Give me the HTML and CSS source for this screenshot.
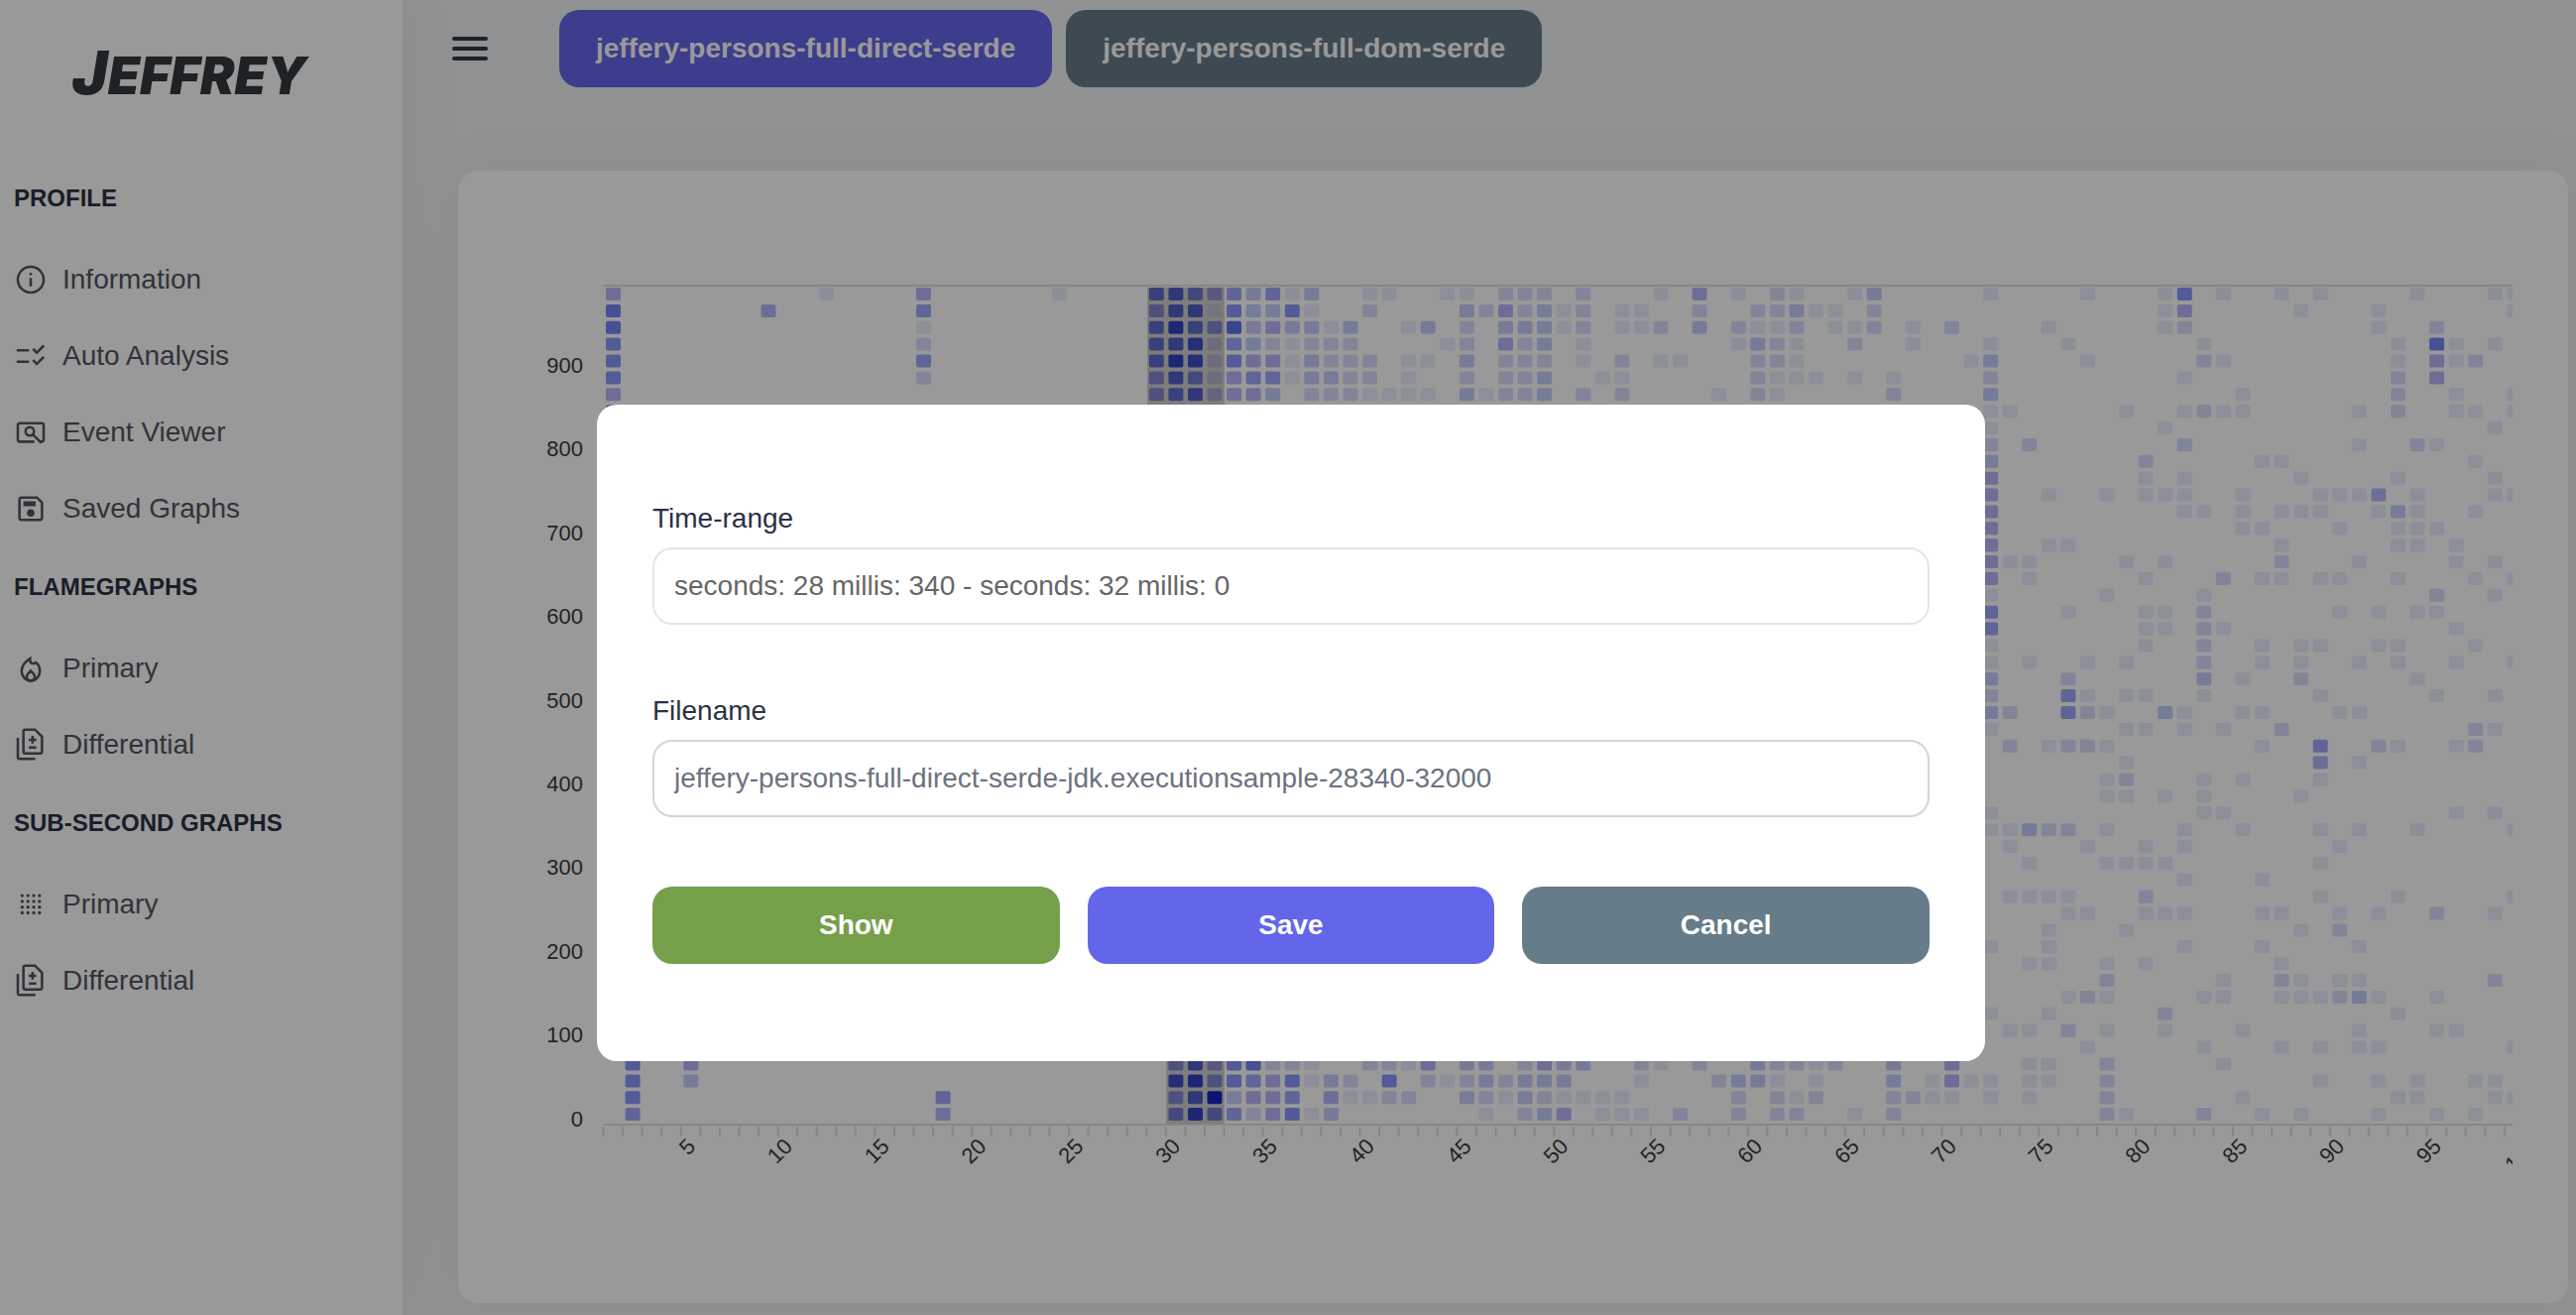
FILE: index.html
```html
<!DOCTYPE html>
<html lang="en">
<head>
<meta charset="utf-8">
<title>Jeffrey</title>
<link rel="stylesheet" href="styles.css">
</head>
<body>
<div class="layout">
  <aside class="sidebar">
    <a class="logo" href="#"><span class="logo-initial">J</span>EFFREY</a>
    <nav class="menu">
      <h2 class="menu-title">PROFILE</h2>
      <a class="menu-item" href="#">
        <svg class="icon" viewBox="0 0 24 24"><circle cx="12" cy="12" r="9.2"/><path d="M12 10.8v6"/><circle class="solid" cx="12" cy="8" r="1"/></svg>
        Information</a>
      <a class="menu-item" href="#">
        <svg class="icon" viewBox="0 0 24 24"><path d="M2 8h8.8M2 16h8.8M13.6 6.9l2.7 2.7 5-5M13.6 14.9l2.7 2.7 5-5"/></svg>
        Auto Analysis</a>
      <a class="menu-item" href="#">
        <svg class="icon" viewBox="0 0 24 24"><path d="M14.6 18.6H4.2c-.8 0-1.400-.6-1.400-1.400V6.800c0-.8.6-1.400 1.400-1.400h15.600c.8 0 1.400.6 1.400 1.400v10.400c0 .8-.6 1.400-1.400 1.400h-1.600"/><circle cx="11.3" cy="11.3" r="3"/><path d="M13.5 13.5l6 6"/></svg>
        Event Viewer</a>
      <a class="menu-item" href="#">
        <svg class="icon" viewBox="0 0 24 24"><path d="M16.4 4H5.4C4.6 4 4 4.600 4 5.400v13.200c0 .8.6 1.400 1.400 1.400h13.200c.8 0 1.400-.6 1.400-1.400V7.600z"/><path class="solid" d="M6.800 6.700h8.700v3.500H6.800z"/><circle class="solid" cx="12" cy="15" r="2.700"/></svg>
        Saved Graphs</a>
      <h2 class="menu-title">FLAMEGRAPHS</h2>
      <a class="menu-item" href="#">
        <svg class="icon" viewBox="0 0 24 24"><path d="M11.500 5C7.800 7.300 5.500 10.500 5.500 14a6.500 6.900 0 0 0 13 0c0-2.700-1.100-4.900-2.900-6.200-1.700 1.500-4.100.5-4.100-1.500z"/><path d="M12 13.700l-2.300 2.500c-1.300 1.700-.5 4.600 2.300 4.600s3.600-2.900 2.300-4.600z"/></svg>
        Primary</a>
      <a class="menu-item" href="#">
        <svg class="icon" viewBox="0 0 24 24"><path d="M15 1.200H8.200c-.8 0-1.400.6-1.400 1.400v14.200c0 .8.6 1.400 1.400 1.400H18.600c.8 0 1.400-.6 1.400-1.400V6.200z"/><path d="M2.800 7v13.700c0 .8.6 1.400 1.400 1.400h11.100M13.300 5.700v5.400M10.600 8.400H16M10.600 14H16"/></svg>
        Differential</a>
      <h2 class="menu-title">SUB-SECOND GRAPHS</h2>
      <a class="menu-item" href="#">
        <svg class="icon icon-dots" viewBox="0 0 24 24"><path d="M5.900 5.700h.01M10 5.700h.01M14.100 5.700h.01M18.200 5.700h.01M5.900 9.800h.01M10 9.800h.01M14.100 9.800h.01M18.200 9.800h.01M5.900 13.900h.01M10 13.900h.01M14.100 13.900h.01M18.200 13.900h.01M5.900 18h.01M10 18h.01M14.100 18h.01M18.200 18h.01"/></svg>
        Primary</a>
      <a class="menu-item" href="#">
        <svg class="icon" viewBox="0 0 24 24"><path d="M15 1.200H8.200c-.8 0-1.400.6-1.400 1.400v14.200c0 .8.6 1.400 1.400 1.400H18.600c.8 0 1.400-.6 1.400-1.400V6.200z"/><path d="M2.800 7v13.700c0 .8.6 1.400 1.400 1.400h11.100M13.300 5.700v5.400M10.600 8.400H16M10.600 14H16"/></svg>
        Differential</a>
    </nav>
  </aside>
  <main class="content">
    <header class="topbar">
      <button class="menu-toggle" type="button" aria-label="Toggle menu">
        <svg viewBox="0 0 36 26"><path d="M2 3h32M2 13h32M2 23h32"/></svg>
      </button>
      <button class="btn btn-primary" type="button">jeffery-persons-full-direct-serde</button>
      <button class="btn btn-secondary" type="button">jeffery-persons-full-dom-serde</button>
    </header>
    <section class="card">
      <svg class="heatmap" id="heatmap" viewBox="0 0 2072 1086" role="img" aria-label="Sub-second heatmap"></svg>
    </section>
  </main>
</div>
<div class="overlay">
  <form class="dialog" role="dialog" aria-modal="true">
    <div class="field">
      <label for="range">Time-range</label>
      <input id="range" type="text" value="seconds: 28 millis: 340 - seconds: 32 millis: 0" disabled>
    </div>
    <div class="field">
      <label for="filename">Filename</label>
      <input id="filename" type="text" value="jeffery-persons-full-direct-serde-jdk.executionsample-28340-32000">
    </div>
    <div class="actions">
      <button class="btn btn-success" type="button">Show</button>
      <button class="btn btn-primary" type="button">Save</button>
      <button class="btn btn-secondary" type="button">Cancel</button>
    </div>
  </form>
</div>
<script src="heatmap.js"></script>
</body>
</html>
```
FILE: styles.css
```css
* {
  box-sizing: border-box;
}

body {
  margin: 0;
  background: #eff2f5;
  color: #334155;
  font-family: "Liberation Sans", Arial, sans-serif;
  font-size: 28px;
  line-height: 34px;
}

.layout {
  display: flex;
  min-height: 100vh;
}

.sidebar {
  flex: 0 0 406px;
  background: #fff;
  box-shadow: 0 0 60px rgba(0, 0, 0, 0.06);
}

.logo {
  display: block;
  height: 160px;
  padding: 38px 24px 0 0;
  color: #343a3d;
  font-family: Inter, "Liberation Sans", sans-serif;
  font-size: 52px;
  font-style: italic;
  font-weight: 900;
  line-height: 70px;
  text-align: center;
  text-decoration: none;
}

.logo-initial {
  font-size: 60px;
}

.menu-title {
  margin: 0;
  padding: 26px 14px 30px;
  color: #2a3245;
  font-size: 24px;
  line-height: 28px;
}

.menu-item {
  display: flex;
  align-items: center;
  gap: 15px;
  height: 77px;
  padding: 0 14px 2px;
  color: #53565f;
  text-decoration: none;
}

.icon {
  width: 34px;
  height: 34px;
  overflow: visible;
  fill: none;
  stroke: currentColor;
  stroke-width: 1.8;
}

.icon .solid {
  fill: currentColor;
  stroke: none;
}

.icon-dots {
  stroke-linecap: round;
  stroke-width: 2.4;
}

.content {
  flex: 1;
  min-width: 0;
  padding: 10px 8px 12px 56px;
}

.topbar {
  display: flex;
  align-items: center;
  gap: 14px;
  margin-bottom: 84px;
}

.menu-toggle {
  width: 94px;
  margin-left: -6px;
  padding: 0;
  border: 0;
  background: none;
}

.menu-toggle svg {
  display: block;
  width: 36px;
  height: 26px;
  fill: none;
  stroke: #343a3d;
  stroke-linecap: round;
  stroke-width: 4;
}

.btn {
  height: 78px;
  padding: 0 37px;
  border: 0;
  border-radius: 20px;
  color: #fff;
  font: bold 28px/34px "Liberation Sans", Arial, sans-serif;
}

.btn-primary {
  background: #6466ea;
}

.btn-secondary {
  background: #667c88;
}

.btn-success {
  background: #769f4a;
}

.card {
  padding: 28px;
  border-radius: 20px;
  background: #fff;
  box-shadow: 0 0 60px rgba(0, 0, 0, 0.05);
}

.heatmap {
  display: block;
  width: 100%;
  fill: #373d3f;
  font-size: 22px;
}

.heatmap .axis {
  fill: none;
  stroke: #e0e0e0;
  stroke-width: 2;
}

.heatmap .selection {
  fill: #000;
  fill-opacity: 0.18;
}

.heatmap .y-label,
.heatmap .x-label {
  text-anchor: end;
  dominant-baseline: central;
}

.overlay {
  position: fixed;
  inset: 0;
  display: flex;
  justify-content: center;
  align-items: flex-start;
  padding: 408px 0 0 6px;
  background: rgba(0, 0, 0, 0.4);
}

.dialog {
  display: flex;
  flex-direction: column;
  gap: 70px;
  width: 1400px;
  max-width: 100%;
  padding: 98px 56px;
  border-radius: 20px;
  background: #fff;
}

.field {
  display: flex;
  flex-direction: column;
  gap: 12px;
  color: #2a3245;
}

.field input {
  width: 100%;
  height: 78px;
  padding: 0 20px;
  border: 2px solid #d1d5db;
  border-radius: 20px;
  background: #fff;
  color: #6b7280;
  font: 28px/34px "Liberation Sans", Arial, sans-serif;
}

.field input:disabled {
  border-color: #e5e5e5;
  color: #666;
}

.actions {
  display: grid;
  grid-template-columns: repeat(3, 1fr);
  gap: 28px;
}
```
FILE: heatmap.js
```js
// Samples per bucket: one string per 20 ms row (top to bottom), "second:level" pairs.
const rows = [
  "0:4 11:1 16:4 23:1 28:7 29:8 30:6 31:4 32:5 33:3 34:5 35:1 36:3 39:1 40:1 43:1 44:1 46:2 47:2 48:2 50:2 54:1 56:4 58:1 60:2 61:1 64:1 65:3 71:1 76:1 80:1 81:6 83:1 86:1 88:1 93:1 97:1 98:1",
  "0:7 8:4 16:5 28:5 29:8 30:8 31:1 32:6 33:3 34:3 35:6 36:1 39:2 44:3 45:2 46:4 47:2 48:3 49:1 50:2 52:1 53:1 56:2 59:2 60:2 61:3 62:1 63:1 65:2 80:1 81:4 87:1 91:1 98:1",
  "0:7 16:1 28:7 29:10 30:7 31:5 32:8 33:3 34:4 35:3 36:3 37:1 38:3 41:1 42:3 44:2 46:3 47:3 48:3 49:1 50:2 52:1 53:1 54:2 56:3 58:2 59:1 60:1 61:2 63:1 64:1 65:2 67:1 69:2 74:1 80:1 81:2 91:1 94:2",
  "0:6 16:2 28:7 29:8 30:9 31:2 32:5 33:3 34:2 35:1 36:2 37:2 38:2 43:1 44:2 46:4 47:2 48:3 50:1 58:1 59:3 60:2 61:1 64:2 67:1 71:1 75:1 82:1 92:1 94:7 95:1 97:1",
  "0:6 16:5 28:7 29:10 30:9 31:2 32:6 33:4 34:4 35:1 36:3 37:2 38:2 39:2 41:1 42:1 44:3 46:2 47:2 48:2 50:1 52:2 54:1 55:1 59:2 60:2 61:1 70:1 71:3 76:1 82:2 83:1 92:1 94:4 95:1 96:2",
  "0:6 16:2 28:5 29:8 30:6 31:2 32:4 33:5 34:5 35:1 36:3 37:3 38:2 39:2 41:1 44:2 46:2 47:2 48:3 51:1 52:1 59:2 60:1 61:1 62:1 64:1 66:1 71:2 81:1 92:2 94:4",
  "0:4 28:5 29:7 30:8 31:3 32:4 33:4 34:3 36:2 37:2 38:2 39:1 40:1 41:1 42:1 44:3 45:1 46:2 47:2 48:3 50:2 52:2 57:1 59:2 60:1 66:2 71:3 84:1 92:2 95:1 98:1",
  "0:6 71:1 72:1 78:1 81:1 82:2 83:1 84:1 90:1 92:2 95:1 96:1 98:1",
  "71:1 80:1 97:1",
  "71:2 73:2 81:2 90:1 93:2 94:1",
  "71:3 79:2 85:1 86:1 96:1",
  "71:4 79:1 81:1 87:1 92:1 97:1",
  "71:4 74:1 77:1 79:1 80:1 81:1 84:1 88:1 89:1 90:1 91:4 93:1 97:1 98:1",
  "71:4 81:1 82:1 84:1 86:1 87:1 88:1 91:1 92:3 93:1 96:1",
  "71:4 84:1 85:1 89:1 92:1 93:1 94:1",
  "71:4 74:1 75:1 86:1 92:1 93:1 95:1",
  "71:4 72:1 73:1 78:1 80:1 86:2 90:1 95:1 97:1",
  "71:4 73:1 79:1 83:2 85:1 86:1 88:1 89:1 92:1 96:1 98:1",
  "71:1 77:1 82:1 94:2 97:1",
  "71:5 75:1 79:1 80:1 82:2 89:1 91:1 93:1 94:1",
  "71:5 79:1 80:1 82:2 83:1 95:1",
  "71:1 79:1 82:2 85:1 87:1 88:1 91:1 92:1 96:1",
  "71:1 73:1 76:1 78:1 82:2 85:1 87:1 90:1 92:1 95:1 98:1",
  "71:3 75:2 82:3 84:1 87:2 93:1",
  "71:2 75:5 76:1 78:1 79:1 82:1 88:1 94:1 97:1",
  "71:3 72:2 75:5 76:2 77:1 80:3 81:1 84:1 85:1 89:1 90:1",
  "71:1 78:1 79:1 81:1 83:1 86:2 96:2 97:1",
  "72:2 74:1 75:2 76:2 77:1 85:1 88:5 91:2 92:1 95:1 96:2",
  "78:1 88:4 90:1",
  "77:1 78:2 82:1 84:1 88:1",
  "77:1 78:1 80:1 82:1 87:1",
  "71:1 82:1 83:1 95:1 97:1",
  "71:1 72:1 73:3 74:2 75:2 77:1 81:1 84:1 88:1 90:1 93:1 98:1",
  "72:1 76:1 79:1 81:1 89:1",
  "73:1 77:1 78:1 79:1 80:1 88:1",
  "81:1 85:1",
  "72:1 73:1 74:1 75:1 79:2 88:1 92:1 98:1",
  "75:1 76:1 79:1 80:1 81:1 85:1 86:1 89:1 91:1 94:2 97:1",
  "74:1 78:1 87:1 89:2",
  "71:1 74:1 81:1 85:1 90:1",
  "73:1 74:1 77:1 79:1 86:1",
  "77:2 83:1 86:2 87:1 89:1 90:1 97:2",
  "75:1 76:2 77:1 82:1 83:1 86:1 87:1 88:1 89:2 90:3 91:1 94:1",
  "71:1 74:1 80:2 92:1",
  "72:1 73:1 75:2 77:1 80:1 84:1 90:1 94:1 95:1",
  "76:1 82:1 86:1 88:1 90:1 91:1 98:1",
  "1:6 4:4 29:5 30:8 31:4 32:6 33:7 34:2 35:2 36:1 39:2 40:2 41:1 42:4 44:3 45:3 47:2 48:4 49:3 50:3 53:2 54:1 56:2 59:3 60:2 61:2 62:1 63:2 66:3 69:4 73:1 74:1 77:2 83:1",
  "1:6 4:3 29:9 30:10 31:5 32:6 33:5 34:4 35:6 36:1 37:3 38:2 40:6 42:2 43:1 44:2 45:3 46:2 47:3 48:3 49:3 53:1 57:2 58:3 59:3 60:1 62:1 66:3 68:1 69:4 70:1 71:1 73:1 74:1 77:2 88:1 91:1 93:1 96:1 97:1",
  "1:6 17:5 29:5 30:8 31:11 32:3 33:4 34:4 35:5 37:4 38:1 39:1 40:2 41:2 44:3 45:2 46:1 47:3 48:2 49:1 50:1 51:1 52:1 58:2 60:2 61:1 62:2 66:2 67:2 68:1 69:1 71:1 73:1 77:2 84:1 92:1 93:1 97:1 98:1",
  "1:5 17:4 29:6 30:10 31:6 32:5 33:2 34:4 35:6 36:1 37:3 45:1 47:2 48:3 49:4 51:1 52:1 53:1 55:2 58:2 60:2 61:2 64:1 66:2 77:2 78:1 82:2 85:1 87:1 91:1 94:1 96:1"
];

const colors = ["", "#e9eefd", "#d9defd", "#c5cdfd", "#b4b7fd", "#a0a7fd", "#8998fc",
  "#7685f7", "#6273f0", "#4e60f1", "#3b50f1", "#162deb"];

const left = 118, right = 2044, top0 = 88, bottom = 934;
const stepX = 19.565, stepY = 16.88;

let svg = `<clipPath id="plot"><rect width="${right}" height="1086"/></clipPath><g clip-path="url(#plot)">`;
svg += `<path class="axis" d="M${left} ${top0}H${right}M${left} ${bottom}H${right}"/>`;

rows.forEach((row, r) => {
  for (const cell of row.split(" ")) {
    const [second, level] = cell.split(":").map(Number);
    const x = left + 3 + second * stepX;
    const y = top0 + 2 + r * stepY;
    svg += `<rect x="${x.toFixed(1)}" y="${y.toFixed(1)}" width="15" height="13" rx="2" fill="${colors[level]}"/>`;
  }
});

// Selected range, from the first picked bucket to the last one.
svg += `<path class="selection" d="M667 90H745V${bottom - 1}H686V500H667z"/>`;

for (let i = 0; i < 99; i++) {
  const x = left + 0.5 + i * stepX;
  svg += `<path class="axis" d="M${x.toFixed(1)} ${bottom + 2}v10"/>`;
  if ((i + 1) % 5 === 0) svg += xLabel(i);
}
svg += xLabel(99) + "</g>";

for (let v = 0; v < 10; v++) {
  svg += `<text class="y-label" x="98" y="${928 - v * 84.4}">${v * 100}</text>`;
}

function xLabel(i) {
  const x = (left + 11 + i * stepX).toFixed(1);
  const y = bottom + 18;
  return `<text class="x-label" x="${x}" y="${y}" transform="rotate(-45 ${x} ${y})">${i + 1}</text>`;
}

document.getElementById("heatmap").innerHTML = svg;
```
